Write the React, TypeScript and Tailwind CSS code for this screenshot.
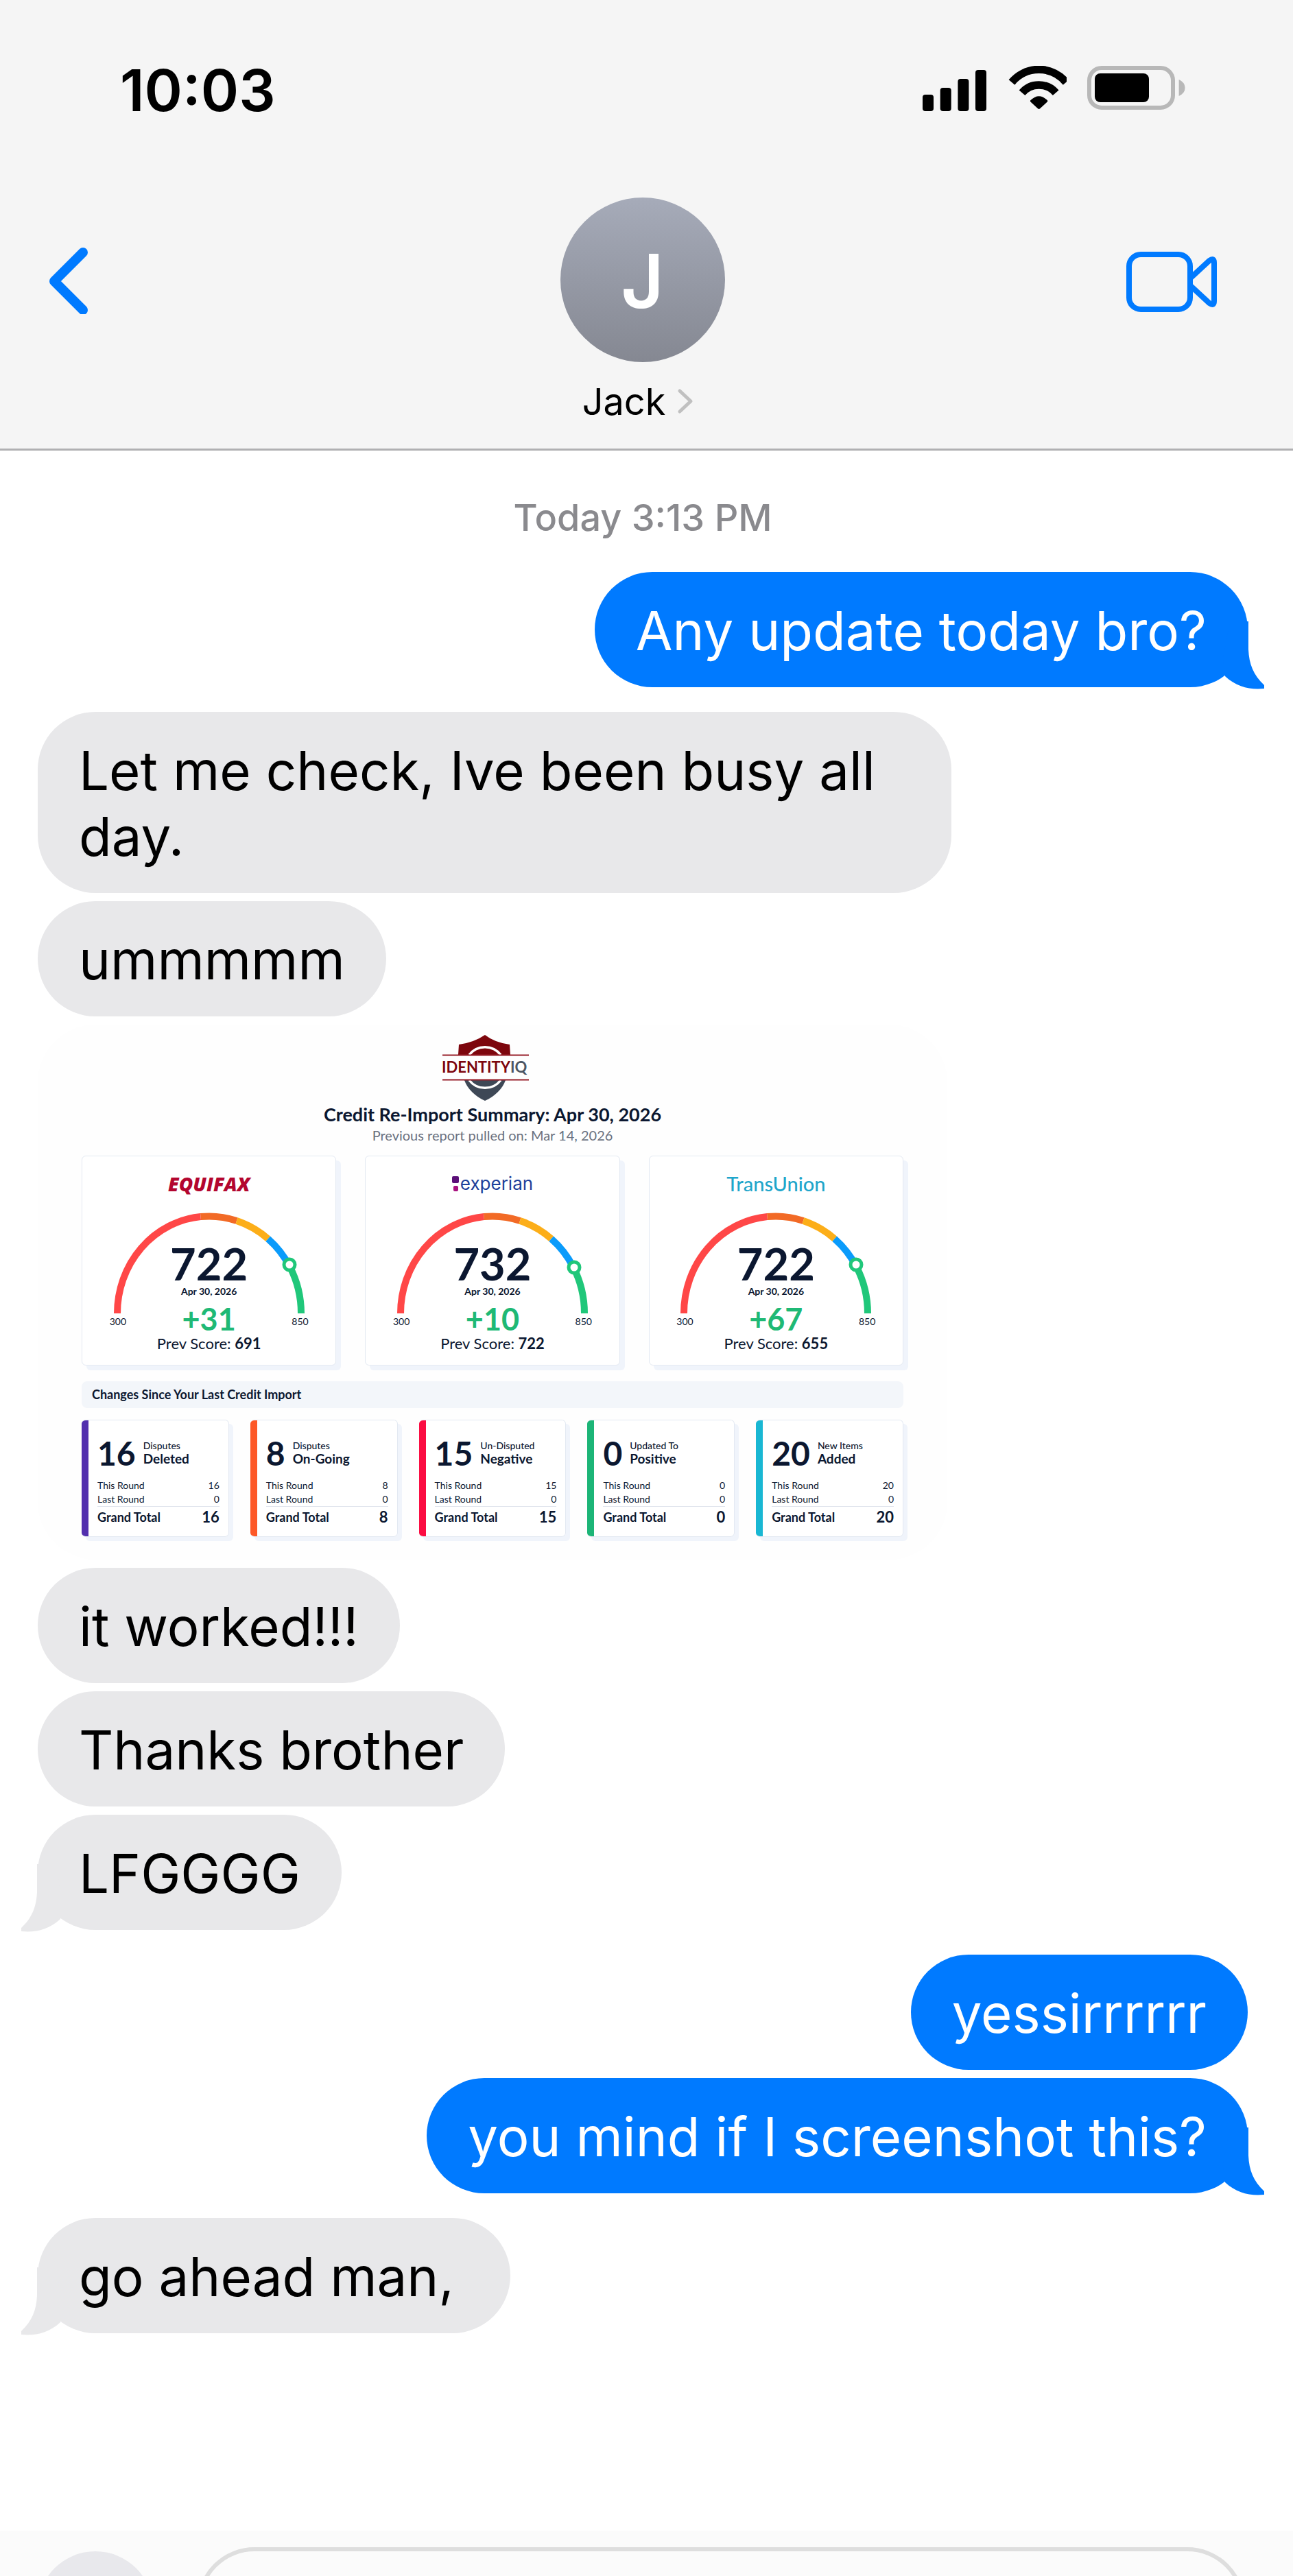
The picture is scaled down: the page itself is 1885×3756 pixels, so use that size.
import type { ReactNode } from "react"

interface Message {
  id: number
  from: "me" | "them"
  text?: string
  report?: boolean
}

interface Bureau {
  name: string
  brand: ReactNode
  score: number
  change: string
  previous: number
  marker: { x: number; y: number }
}

interface Stat {
  count: number
  kind: string
  label: string
  bar: string
}

// Consecutive messages by one sender share a group; the last one gets the tail
const groups: Message[][] = [
  [{ id: 1, from: "me", text: "Any update today bro?" }],
  [
    { id: 2, from: "them", text: "Let me check, Ive been busy all day." },
    { id: 3, from: "them", text: "ummmmm" },
    { id: 4, from: "them", report: true },
    { id: 5, from: "them", text: "it worked!!!" },
    { id: 6, from: "them", text: "Thanks brother" },
    { id: 7, from: "them", text: "LFGGGG" },
  ],
  [
    { id: 8, from: "me", text: "yessirrrrrr" },
    { id: 9, from: "me", text: "you mind if I screenshot this?" },
  ],
  [{ id: 10, from: "them", text: "go ahead man,\u00a0" }],
]

const bureaus: Bureau[] = [
  {
    name: "Equifax",
    brand: (
      <span className="font-['Open_Sans'] text-[28px] font-extrabold italic text-[#b3062f]">EQUIFAX</span>
    ),
    score: 722,
    change: "+31",
    previous: 691,
    marker: { x: 262, y: 78 },
  },
  {
    name: "Experian",
    brand: (
      <span className="flex items-center gap-[2px]">
        <svg className="h-[22px] w-[10px]" viewBox="0 0 10 22" aria-hidden="true">
          <rect x="0" y="0" width="10" height="10" rx="2" fill="#5b1078" />
          <rect x="2" y="14" width="7" height="8" rx="2" fill="#a8127f" />
        </svg>
        <span className="font-[Inter] text-[26px] text-[#1d3f9a]">experian</span>
      </span>
    ),
    score: 732,
    change: "+10",
    previous: 722,
    marker: { x: 264, y: 82 },
  },
  {
    name: "TransUnion",
    brand: <span className="text-[29px] font-medium text-[#1fa6cb]">TransUnion</span>,
    score: 722,
    change: "+67",
    previous: 655,
    marker: { x: 262, y: 78 },
  },
]

const stats: Stat[] = [
  { count: 16, kind: "Disputes", label: "Deleted", bar: "bg-[#522fae]" },
  { count: 8, kind: "Disputes", label: "On-Going", bar: "bg-[#fd5827]" },
  { count: 15, kind: "Un-Disputed", label: "Negative", bar: "bg-[#fb0d42]" },
  { count: 0, kind: "Updated To", label: "Positive", bar: "bg-[#1cb577]" },
  { count: 20, kind: "New Items", label: "Added", bar: "bg-[#19b7d3]" },
]

function StatusBar() {
  return (
    <div className="flex items-start justify-between pt-[87px] pr-[157px] pl-[175px]">
      <span className="text-[84px] leading-[90px] font-semibold">10:03</span>
      <div className="mt-[9px] flex gap-[30px]">
        <svg className="h-[66px] w-[93px]" viewBox="0 0 93 66" aria-label="Signal">
          <rect x="0" y="42" width="16" height="24" rx="4" />
          <rect x="25.7" y="32" width="16" height="34" rx="4" />
          <rect x="51.4" y="19" width="16" height="47" rx="4" />
          <rect x="77" y="6" width="16" height="60" rx="4" />
        </svg>
        <svg className="h-[66px] w-[87px]" viewBox="0 0 87 66" aria-label="Wi-Fi">
          <g fill="none" stroke="black" strokeWidth="11.4">
            <path d="M7 24A51.4 51.4 0 0 1 86.2 24" />
            <path d="M22 39.3A32.4 32.4 0 0 1 71.2 39.3" />
          </g>
          <path d="M34.4 52.4Q33.2 51 34.8 49.8Q46.6 38.6 58.4 49.8Q60 51 58.8 52.4L48.2 62.2Q46.6 63.8 45 62.2Z" />
        </svg>
        <svg className="h-[66px] w-[143px]" viewBox="0 0 143 66" aria-label="Battery">
          <rect x="3" y="3" width="122" height="58" rx="18" fill="none" stroke="#b8b8b8" strokeWidth="6" />
          <rect x="11" y="11" width="79" height="42" rx="8" />
          <path d="M133.6 20Q142.6 24 142.6 32T133.6 44Z" fill="#b8b8b8" />
        </svg>
      </div>
    </div>
  )
}

function ChatHeader() {
  return (
    <header className="border-b-[3px] border-[#b0b0b2] bg-[#f5f5f5]">
      <StatusBar />
      <nav className="mt-[111px] grid grid-cols-[1fr_auto_1fr] pr-3 pb-[38px]">
        <button className="ml-[70px] h-[240px] justify-self-start" aria-label="Back">
          <svg className="h-[100px] w-[58px]" viewBox="0 0 58 100" fill="none">
            <path d="M51 10L9 52L51 94" stroke="#007aff" strokeWidth="14" strokeLinecap="round" strokeLinejoin="round" />
          </svg>
        </button>
        <div className="flex flex-col items-center">
          <div className="flex size-[240px] items-center justify-center rounded-full bg-linear-to-b from-[#a6abb9] to-[#858892] pt-1 text-[108px] leading-none font-semibold text-white">
            J
          </div>
          <a href="#jack" className="mt-7 flex text-[54px] leading-[60px]">
            Jack
            <svg className="h-[60px] w-[54px]" viewBox="0 0 54 60" fill="none" aria-hidden="true">
              <path d="M21 14L37 29L21 44" stroke="#c0c0c0" strokeWidth="5" strokeLinecap="round" strokeLinejoin="round" />
            </svg>
          </a>
        </div>
        <button className="mr-[99px] h-[240px] justify-self-end" aria-label="Video call">
          <svg className="h-[96px] w-[132px]" viewBox="0 0 132 96" fill="none" stroke="#007aff" strokeWidth="8">
            <rect x="4" y="11" width="89" height="80" rx="17" />
            <path d="M94 45L121 20Q128 15 128 23V79Q128 87 121 82L94 57" strokeLinejoin="round" />
          </svg>
        </button>
      </nav>
    </header>
  )
}

function IdentityLogo() {
  return (
    <svg className="h-[96px] w-[146px]" viewBox="0 0 146 96" aria-label="IdentityIQ">
      <path d="M62 0Q76 11 98 14L99 29H23L24 14Q46 11 62 0Z" fill="#7d060d" />
      <path d="M32 66H92C88 78 76 90 62 96C48 90 36 78 32 66Z" fill="#3e4856" />
      <path d="M39 29A29 29 0 0 1 85 29" fill="none" stroke="white" strokeWidth="3.5" />
      <path d="M39 66A29 29 0 0 0 85 66" fill="none" stroke="white" strokeWidth="3.5" />
      <path d="M0 29.5H126M0 65.5H126" stroke="#97202a" strokeWidth="2" />
      <text x="-1" y="55" fontFamily="Lato" fontSize="22" fontWeight="700" fill="#7d060d">
        IDENTITY
        <tspan fill="#4b5563">IQ</tspan>
      </text>
    </svg>
  )
}

function ScoreCard({ bureau }: { bureau: Bureau }) {
  return (
    <div className="flex flex-col items-center rounded-md border border-[#e3e9f2] bg-white pt-[22px] pb-5 shadow-[7px_7px_0_#f0f4fb]">
      <div className="flex h-9 items-center leading-9">{bureau.brand}</div>
      <div className="relative mt-[22px] w-[290px] pt-[46px]">
        <svg className="absolute top-0 left-0 h-[150px] w-[290px]" viewBox="0 0 290 150" fill="none" strokeWidth="10" aria-hidden="true">
          <path d="M11 149A134 141.5 0 0 1 132.5 8.1" stroke="#ff4747" />
          <path d="M132.5 8.1A134 141.5 0 0 1 185 14" stroke="#f26a26" />
          <path d="M185 14A134 141.5 0 0 1 230.7 40.2" stroke="#fcae19" />
          <path d="M230.7 40.2A134 141.5 0 0 1 262.4 80.8" stroke="#0a9bfb" />
          <path d="M262.4 80.8A134 141.5 0 0 1 279 149" stroke="#20c77a" />
          <circle cx={bureau.marker.x} cy={bureau.marker.y} r="8" fill="white" stroke="#20c77a" strokeWidth="5" />
        </svg>
        <div className="text-center text-[65px] leading-[60px] font-bold">{bureau.score}</div>
        <div className="text-center text-[14px] leading-[22px] font-bold">Apr 30, 2026</div>
        <div className="mt-[5px] flex items-center justify-between">
          <span className="pt-2 text-[14px] leading-[20px]">300</span>
          <span className="text-[45px] leading-[48px] font-bold text-[#1fb975]">{bureau.change}</span>
          <span className="pt-2 text-[14px] leading-[20px]">850</span>
        </div>
        <div className="text-center text-[22px] leading-[23px]">
          Prev Score: <b>{bureau.previous}</b>
        </div>
      </div>
    </div>
  )
}

function StatCard({ stat }: { stat: Stat }) {
  return (
    <div className="flex overflow-hidden rounded-md border border-l-0 border-[#e3e9f2] bg-white">
      <div className={`w-[10px] shrink-0 ${stat.bar}`} />
      <div className="grow px-[13px] pt-6 pb-[13px]">
        <div className="flex items-center gap-[11px]">
          <span className="text-[48px] leading-[48px] font-bold">{stat.count}</span>
          <div>
            <div className="text-[14px] leading-[16px] font-medium">{stat.kind}</div>
            <div className="text-[19px] leading-[22px] font-bold">{stat.label}</div>
          </div>
        </div>
        <table className="mt-[13px] w-full text-[14px] leading-[20px]">
          <tbody>
            <tr>
              <th className="text-left font-normal">This Round</th>
              <td className="text-right">{stat.count}</td>
            </tr>
            <tr>
              <th className="text-left font-normal">Last Round</th>
              <td className="text-right">0</td>
            </tr>
            <tr className="border-t border-[#dfe3ec] font-bold">
              <th className="text-left text-[18px] leading-[30px]">Grand Total</th>
              <td className="text-right text-[22px] leading-[30px]">{stat.count}</td>
            </tr>
          </tbody>
        </table>
      </div>
    </div>
  )
}

function CreditReport() {
  return (
    <div className="w-[1326px] rounded-[84px] bg-[#fefefe] px-[64px] pt-[15px] pb-[33px] font-[Lato,sans-serif] text-[#0b1730]">
      <div className="flex flex-col items-center">
        <IdentityLogo />
        <h2 className="mt-1 text-[27px] leading-[32px] font-bold">Credit Re-Import Summary: Apr 30, 2026</h2>
        <p className="text-[20px] leading-[28px] text-[#6b7280]">Previous report pulled on: Mar 14, 2026</p>
      </div>
      <div className="mt-4 grid grid-cols-3 gap-[42px]">
        {bureaus.map(bureau => (
          <ScoreCard key={bureau.name} bureau={bureau} />
        ))}
      </div>
      <h3 className="mt-[23px] rounded-lg bg-[#f3f6fa] px-[15px] text-[18px] leading-[39px] font-bold">
        Changes Since Your Last Credit Import
      </h3>
      <div className="mt-[17px] grid grid-cols-5 gap-[31px]">
        {stats.map(stat => (
          <div key={stat.label} className="rounded-md shadow-[6px_6px_0_#f0f4fb]">
            <StatCard stat={stat} />
          </div>
        ))}
      </div>
    </div>
  )
}

function Tail({ mine }: { mine: boolean }) {
  return (
    <svg
      className={
        mine
          ? "absolute -right-6 -bottom-[3px] h-[105px] w-[60px] fill-[#007aff]"
          : "absolute -bottom-[3px] -left-6 h-[105px] w-[60px] -scale-x-100 fill-[#e8e8ea]"
      }
      viewBox="0 0 60 105"
      aria-hidden="true"
    >
      <path d="M10 6H37V47C38 68 44 84 60 99V104C40 106 20 102 3 86L0 60Z" />
    </svg>
  )
}

function Bubble({ message, tail }: { message: Message; tail: boolean }) {
  const mine = message.from === "me"
  return (
    <div
      className={
        mine
          ? "relative max-w-[1332px] self-end rounded-[84px] bg-[#007aff] px-[60px] pt-[38px] pb-[34px] text-[78px] leading-[96px] text-white"
          : "relative max-w-[1332px] self-start rounded-[84px] bg-[#e8e8ea] px-[60px] pt-[38px] pb-[34px] text-[78px] leading-[96px] text-black"
      }
    >
      {tail && <Tail mine={mine} />}
      <span className="relative">{message.text}</span>
    </div>
  )
}

function Composer() {
  return (
    <form className="flex shrink-0 items-center gap-16 bg-[#fbfbfb] pt-6 pr-[70px] pb-12 pl-[55px]">
      <button
        type="button"
        aria-label="Add attachment"
        className="flex size-[168px] shrink-0 items-center justify-center rounded-full bg-[#e8e8ec]"
      >
        <svg className="size-[72px]" viewBox="0 0 72 72" stroke="#7e7e83" strokeWidth="9" strokeLinecap="round">
          <path d="M36 8V64M8 36H64" />
        </svg>
      </button>
      <input
        aria-label="Message"
        className="h-[180px] min-w-0 grow rounded-[84px] border-[6px] border-[#dedede] bg-transparent px-[54px] text-[78px]"
      />
    </form>
  )
}

export default function App() {
  return (
    <div className="flex h-screen flex-col overflow-hidden bg-white font-[Inter,sans-serif] text-black">
      <ChatHeader />
      <main className="shrink-0 pt-[68px] pr-[66px] pb-[288px] pl-[55px]">
        <p className="text-center text-[54px] leading-[60px] font-medium text-[#8a8a8e]">Today 3:13 PM</p>
        <div className="mt-[49px] flex flex-col gap-9">
          {groups.map(group => (
            <div key={group[0].id} className="flex flex-col gap-3">
              {group.map((message, i) =>
                message.report ? (
                  <CreditReport key={message.id} />
                ) : (
                  <Bubble key={message.id} message={message} tail={i === group.length - 1} />
                )
              )}
            </div>
          ))}
        </div>
      </main>
      <Composer />
    </div>
  )
}
